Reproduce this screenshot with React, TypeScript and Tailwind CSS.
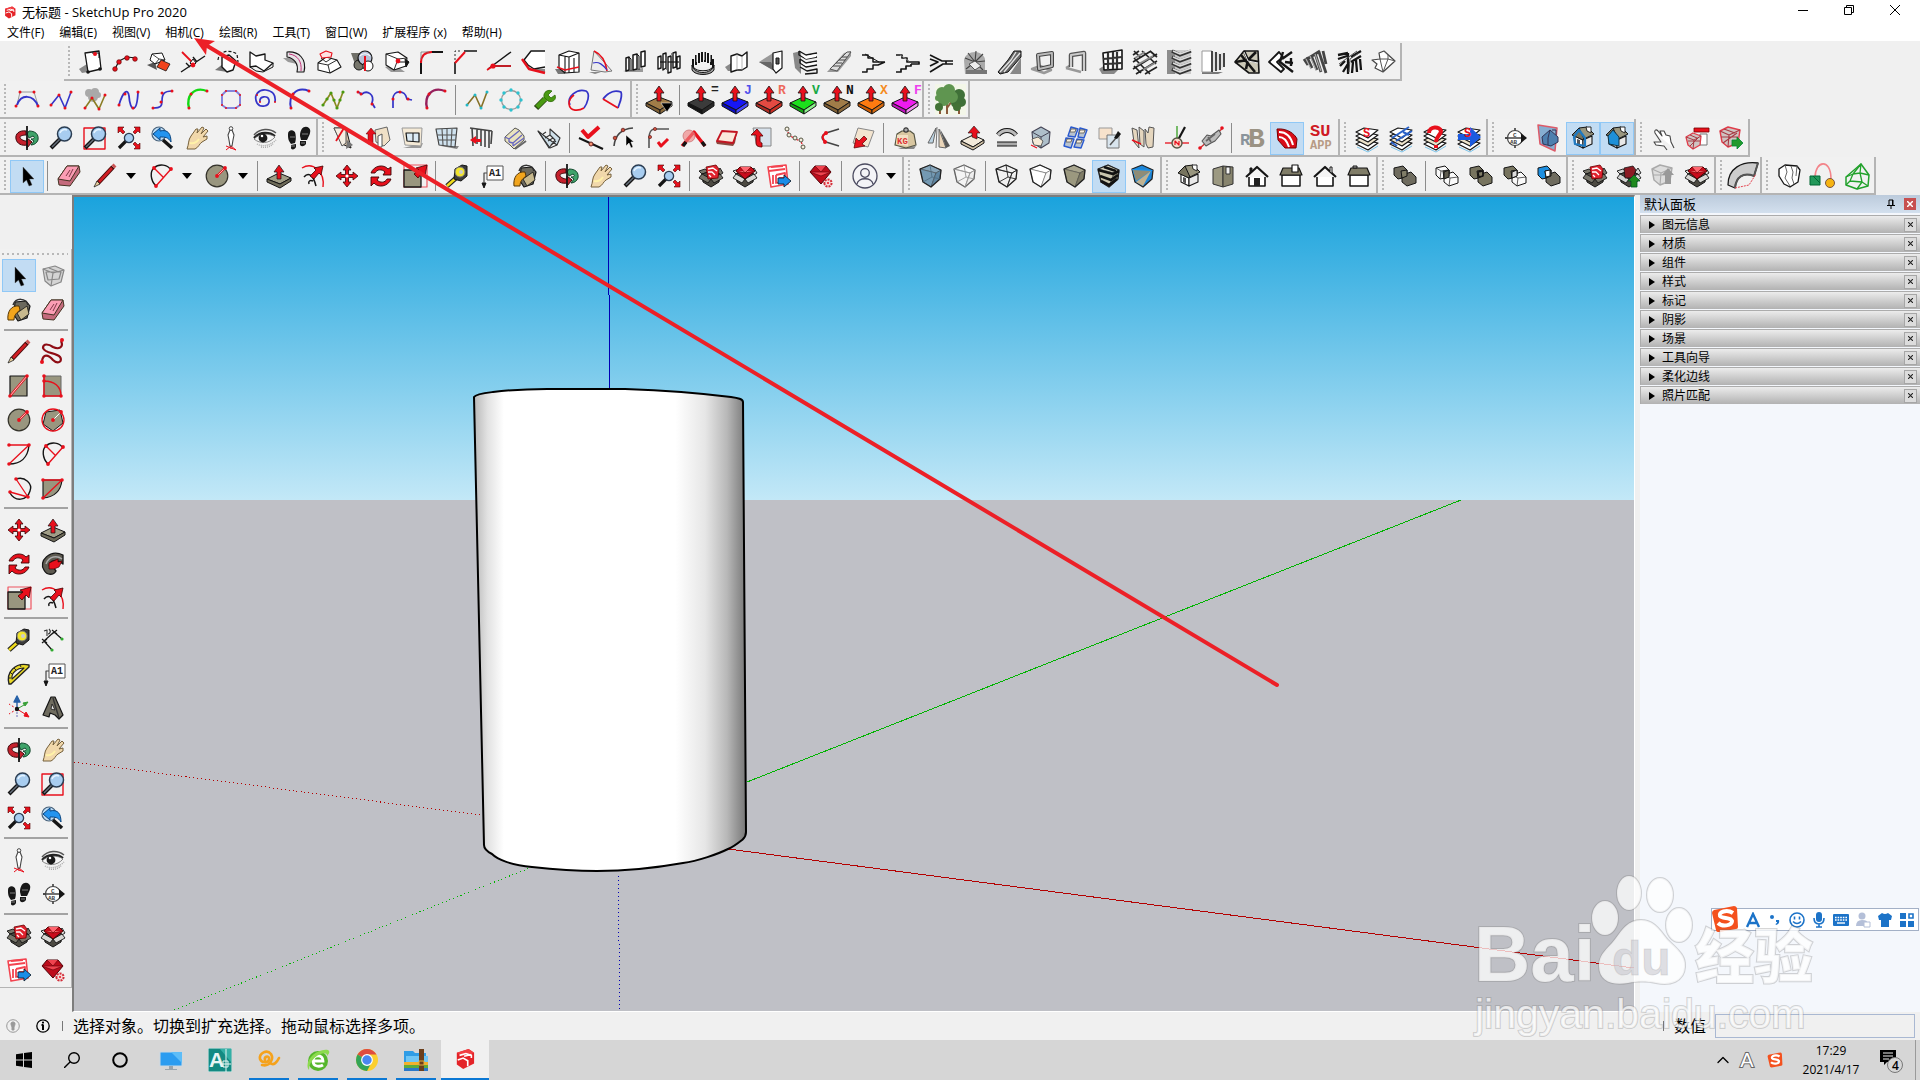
import { ChevronUp } from 'lucide-react';

// [path, fill, stroke, stroke width, dash]
type Shape = [string, string?, string?, number?, string?];
// [x, y, text, fill, font size]
type Label = [number, number, string, string, number];

interface Icon {
  shapes: Shape[];
  labels?: Label[];
}

const K = '#151515';
const R = '#e8101c';
const TAN = '#99967f';
const BLUE = '#3434c8';
const G = '#8c8c8c';
const W = '#ffffff';
const NO = 'none';

const dot = (x: number, y: number, r = 1.7) =>
  `M${x - r} ${y}a${r} ${r} 0 1 0 ${2 * r} 0a${r} ${r} 0 1 0 ${-2 * r} 0z`;

const dots = (points: number[][], fill = R, r = 1.5): Shape => [points.map(([x, y]) => dot(x, y, r)).join(''), fill, NO];

const upArrow = 'M12 -2L17 5H14V13H10V5H7Z';

const push = (top: string, left: string, right: string): Shape[] => [
  ['M-1 15L12 9L25 14L13 22Z', top, K, 1],
  ['M-1 15L13 22V26L-1 18Z', left, K, 1],
  ['M13 22L25 14V18L13 26Z', right, K, 1],
  [upArrow, R, K, 0.8],
];

const layers: Shape[] = [
  ['M1 18L9 14L23 17L13 24Z', W, K, 1.2],
  ['M1 14L9 10L23 13L13 20Z', '#ece3cb', K, 1.2],
  ['M1 10L9 6L23 9L13 16Z', W, K, 1.2],
  ['M1 6L9 2L23 4L13 12Z', W, K, 1.2],
  ['M2 21L13 26L23 20', NO, '#7cc4ea', 1],
];

const cube = (a: string, b: string, c: string, stroke = '#222'): Shape[] => [
  ['M1 5L11 1L22 6L17 9Z', a, stroke, 0.4],
  ['M1 5L17 9L12 23L4 18Z', b, stroke, 0.4],
  ['M17 9L22 6L21 15L12 23Z', c, stroke, 0.4],
  ['M1 5L11 1L22 6L21 15L12 23L4 18Z', NO, stroke, 1.3],
];

const house: Shape[] = [
  ['M4 10L12 14V22L4 18Z', W, K, 1.1],
  ['M12 14L21 10V18L12 22Z', '#e8e8e8', K, 1.1],
  ['M1 9L8 2L14 8L12 14Z', '#77745f', K, 1],
  ['M8 2L16 1L23 8L13 13Z', TAN, K, 1],
  ['M15 1H20V7L16 5Z', W, K, 0.9],
  ['M6 13L9 14V20L6 18Z', '#555', NO],
];

const solid = (a: string, b: string): Shape[] => [
  ['M1 4L10 2L14 6V13L5 15L1 11Z', a, K, 1],
  ['M9 11L18 8L23 13V19L14 22L9 18Z', b, K, 1],
  ['M8 7L14 6V12L9 14Z', '#807d68', K, 1],
];

const crate = (flaps = '#77756a'): Shape[] => [
  ['M3 10L0 7L6 5L10 8ZM18 8L21 4L24 9L21 11Z', flaps, K, 0.9],
  ['M3 10L12 7L21 10L20 18L12 23L4 18Z', '#4c4a42', K, 1],
  ['M3 10L12 15L21 10L24 14L15 19L12 15L9 19L0 14Z', flaps, K, 0.9],
];

const magnifier: Shape[] = [
  ['M2 22L11 13', NO, K, 4],
  ['M3 21L11 13', NO, '#66707c', 1.4],
  [dot(15.5, 8, 7), '#a8cdf0', '#2b3d52', 1.5],
  ['M11 7C12 4 15 3 18 4', NO, '#e4f3ff', 1.5],
];

const icons: Record<string, Icon> = {
  // edge and surface plugins
  sheet: { shapes: [['M0 19L8 14L9 22L3 23Z', '#888'], ['M6 3L20 1L22 19L9 22Z', W, K, 1.3], ['M13 3H20V8', NO, K, 1], dots([[16, 4]], R, 2), dots([[9, 22], [21, 19]], K, 1.8)] },
  beads: { shapes: [['M2 19L6 11L14 7L23 8', NO, K, 1.2], [dot(2, 19, 2.3) + dot(6, 12, 2.3) + dot(14, 8, 2.3) + dot(22, 9, 2.3), R, '#600', 0.7]] },
  patch: { shapes: [['M0 15L8 12L10 20L4 17Z', '#555'], ['M5 4L15 3L18 10L8 14L3 10Z', W, K, 1], ['M5 4L12 9L18 10M12 9L8 14', NO, K, 0.8], ['M10 17L14 10L23 14L19 21Z', '#f2441d', K, 0.8]] },
  weld: { shapes: [['M1 2L12 13', NO, R, 1.8], ['M0 22L12 14L24 6M5 13L9 17M12 7L16 12', NO, K, 1.4], ['M9 13L12 9L15 13L12 16Z', W, K, 1], dots([[12, 15]], R, 2.4)] },
  shell: { shapes: [['M0 20L8 14L12 22Z', '#777'], ['M7 7L14 5L21 11L18 20L12 22L7 17Z', W, K, 1.4], ['M3 10C4 1 14 -1 22 4L23 12', NO, K, 1.2, '3 2']] },
  extrude: { shapes: [['M1 2L7 6L16 4V10L24 13L15 21L7 16L1 17Z', W, K, 1.3], ['M1 17L7 21L14 22L24 17V13', NO, K, 1]] },
  pipe: { shapes: [['M0 8H9L14 14L5 12Z', '#999'], ['M4 2C16 1 24 9 21 22L14 22C16 14 11 8 4 7Z', '#e6e3e6', K, 1.1], ['M6 4C15 5 19 12 18 21', NO, '#c2347a', 1]] },
  dome: { shapes: [['M1 13L9 7L20 10L24 17L13 23L1 20Z', W, K, 1.1], ['M1 13L11 15L20 10M11 15L13 23M4 8L9 12L15 8', NO, K, 0.9], ['M3 4L9 1L15 3L14 7L5 8Z', '#ffe2e2', R, 1.1]] },
  spheres: { shapes: [['M0 3H10V17H5Z', '#6f6f68'], [dot(8, 15, 5), '#77766c', K, 1], [dot(14, 8, 7), '#b9c3d8', K, 1.2], [dot(17, 16, 5), W, K, 1], ['M14 6V21', NO, R, 2], ['M9 6C11 3 17 3 19 6', NO, W, 1.2]] },
  boxarrow: { shapes: [['M0 17L9 14L20 22H6Z', '#999'], ['M1 4L13 2L22 8L21 16L9 20L1 15Z', W, K, 1.1], ['M1 4L13 9L22 8M13 9L9 20', NO, K, 0.9], ['M14 12H24M20 9L24 12L21 17Z', K, K, 1], dots([[13, 11]], R, 2.4)] },
  fillet: { shapes: [['M2 24V11M12 2H24', NO, K, 2], ['M2 13C2 6 5 2 13 2', NO, R, 2], ['M2 9V2H10', NO, '#777', 0.8]] },
  chamfer: { shapes: [['M2 24V12M11 1H24', NO, K, 1.6], ['M2 13L12 2', NO, R, 2], ['M2 10V1H9', NO, K, 0.9, '2 2']] },
  angle: { shapes: [['M1 19L24 2M6 16H24', NO, K, 1.4], ['M0 20L6 16H24', NO, R, 1.6], dots([[6, 16]], R, 2.6)] },
  offset3d: { shapes: [['M3 12L9 20L24 23V19H10Z', '#888'], ['M24 1H10L3 10L7 15L13 19L24 17Z', W], ['M24 1H10L3 10L7 15L13 19L24 17', NO, K, 1.4], ['M1 9L8 19L24 23', NO, R, 2.4]] },
  drape: { shapes: [['M0 19H10V24H3Z', '#777'], ['M4 5L14 1L24 3V22L10 23L4 18Z', W, K, 1.2], ['M4 5L14 7L24 3M10 6V23M14 7V23M19 8V22', NO, K, 1.1], ['M2 17L10 20L24 17', NO, R, 1.5]] },
  sail: { shapes: [['M0 22H12L6 24Z', '#888'], ['M5 1L2 20L16 22L23 21L16 13Z', '#ececec', '#777', 1], ['M5 1C14 5 17 13 18 21', NO, R, 1.6], ['M4 13C10 11 14 15 18 20', NO, BLUE, 1.2]] },
  columns: { shapes: [['M0 21L20 18V22H5Z', '#999'], ['M3 8L6 7V20L3 21ZM10 5L14 4V19L10 20ZM18 2L22 1V16L18 17Z', W, K, 1.5], ['M6 7L8 9V21M14 4L16 6V20', NO, K, 1]] },
  manycolumns: { shapes: [['M1 7L4 6V18L1 19ZM6 4L9 3V18L6 20ZM11 7L14 6V22L11 23ZM16 3L19 2V17L16 18ZM20 7L23 6V18L20 19Z', W, K, 1.4], ['M3 12H22', NO, K, 1.2], ['M8 8H10V20M14 4H16', NO, '#666', 1.5]] },
  ringcolumns: { shapes: [['M1 15C3 25 21 25 23 15V20C20 26 4 26 1 20Z', '#999', K, 1], ['M2 9V17M5 5V15M8 3V13M11 2V12M14 2V12M17 3V13M20 5V15M22 9V18', NO, K, 2], ['M2 17C6 22 18 22 22 17', '#eee', K, 1.2], ['M6 4V12M13 2V10M19 5V12', NO, W, 0.9]] },
  fold: { shapes: [['M0 17L8 12V21L3 21Z', '#888'], ['M6 6L12 4V20L6 22ZM12 4L17 6V20L12 20ZM17 6L22 2V17L17 20Z', W, NO], ['M6 22V6L12 4L17 6L22 2V17L17 20L12 20Z', NO, K, 1.4], ['M12 4V20M17 6V20', NO, '#999', 0.7]] },
  wallwindow: { shapes: [['M0 12L14 3V20Z', '#999'], ['M0 12L12 12L17 22Z', '#666'], ['M14 3L23 1V18L17 23L14 19Z', W, K, 1.2], ['M17 8H20V14H17Z', '#555', K, 1]] },
  shelves: { shapes: [['M0 3L8 1V24L2 18Z', '#888'], ['M6 1L13 5L24 3M6 1V5L13 9L24 7M7 9L13 13L24 11M7 9V13L13 17L24 15M7 17L14 21L24 19V23L12 24', NO, K, 1.4], ['M8 5L13 9L23 7V4L13 6ZM8 13L13 16L23 14V12L13 14Z', W]] },
  ramp: { shapes: [['M0 22L17 3L24 1V6L11 22Z', '#999'], ['M3 19L20 2L24 2L10 21Z', '#ddd', '#555', 1], ['M6 16H13M9 13H15M12 10H18M15 7H20', NO, '#444', 1]] },
  steps1: { shapes: [['M1 5H7V8H12V12H24M1 22H6V19H12V15H17L24 12', NO, K, 1.5], ['M4 4L18 12', NO, K, 1]] },
  steps2: { shapes: [['M1 5H7V8H12V12H24V14H16M1 22H6V19H11V16H16V14', NO, K, 1.7], ['M5 5L14 11', NO, '#888', 1]] },
  split: { shapes: [['M1 5L13 11H24M1 9L9 12L1 16M1 22L14 14H24M17 11V14', NO, K, 1.7]] },
  gearshade: { shapes: [['M1 10C3 0 19 -1 22 9V24H2Z', '#aaa'], ['M12 12L2 8M12 12L5 3M12 12L13 1M12 12L20 4M12 12L22 11M12 12L20 20M12 12L12 24M12 12L3 19', NO, '#444', 1.1], ['M6 14L12 11L18 16L12 20Z', '#eee', '#555', 1], ['M3 20H24V24H3Z', '#777']] },
  escalator: { shapes: [['M13 24L24 8V24Z', '#888'], ['M1 22L11 10L17 1L24 1V7L11 22L3 24Z', '#666', K, 1], ['M3 22L14 10L19 2M7 22L17 10L23 3', NO, '#e6e6e6', 1.3]] },
  frame: { shapes: [['M1 19L9 16L20 20L13 23Z', NO, '#999', 2.5], ['M7 5L21 3V16L8 19Z', NO, '#444', 4], ['M7 5L21 3V16L8 19Z', NO, '#bbb', 1.8]] },
  arch: { shapes: [['M1 18L16 22M1 18L6 15', NO, '#999', 2.5], ['M6 17V5L19 3V21', NO, '#555', 4.5], ['M6 17V5L19 3V21', NO, '#ccc', 2]] },
  mesh: { shapes: [['M0 19L6 15V20L20 19L15 24H3Z', '#888'], ['M4 3L23 0V19L5 20Z', W, K, 1.6], ['M9 3V20M14 2V19M18 2V19M4 9L23 7M4 14L23 13', NO, '#333', 2.2]] },
  weave: { shapes: [['M0 0H24V24H0Z', '#f3f3f3'], ['M0 5L6 1M0 12L18 1M0 19L24 4M3 24L24 11M12 24L24 17M1 1L8 8M9 1L23 14M1 8L17 24M1 16L8 23M17 1L24 7', NO, '#222', 1.7], ['M2 8L12 2M4 15L20 6M10 20L22 13', NO, G, 2]] },
  louvers: { shapes: [['M0 0H8V24H0Z', G], ['M8 0H24V24H8Z', '#ccc'], ['M5 1L13 5L24 1M5 7L13 11L24 7M5 13L13 17L24 13M5 19L13 23L24 19', NO, '#333', 3.4], ['M6 1L13 4L24 0M6 7L13 10L24 6M6 13L13 16L24 12M6 19L13 22L24 18', NO, '#ddd', 1.5]] },
  curtains: { shapes: [['M1 22H22L17 24H1Z', '#777'], ['M1 1H11V22H1Z', W, '#999', 1], ['M11 1V22M15 2V21M19 4V20M23 3V17', NO, '#444', 2], ['M13 2V21M17 3V20M21 3V18', NO, '#ddd', 1.6]] },
  hexa: { shapes: [['M0 12L9 1H23L24 23H14Z', '#ccc9b8', K, 1.6], ['M9 1L13 10L24 12M0 12L13 10L11 19M6 5L20 22M13 10L21 2', NO, K, 2.6], ['M9 2L13 11L23 13', NO, '#eee', 1]] },
  hexb: { shapes: [['M0 12L10 2L14 7L8 12L15 19L12 22Z', W, K, 1.8], ['M14 2L11 12L24 22M13 9L23 2M16 12L24 13M22 16V8', NO, K, 2.4]] },
  rafters: { shapes: [['M1 9L5 15M4 7L9 18M8 5L14 20M12 3L18 22M16 2L23 23M20 1L23 14M1 11L17 1', NO, '#444', 2.8], ['M3 9L8 19M7 6L13 20M12 4L18 21', NO, '#aaa', 1.2]] },
  branches: { shapes: [['M1 5L11 3M1 9L10 6M3 16L8 11M12 12L6 22M11 3V24M24 1L14 7M24 6L14 12M16 12L15 23M19 10L20 22M23 9L24 20', NO, K, 2.3], ['M2 14L20 1M13 9L12 22M22 3L13 9', NO, '#555', 1]] },
  gem: { shapes: [['M1 10L9 9L8 3L13 1L24 11L12 22L4 18L6 14Z', W, '#444', 1.2], ['M9 9H17V5L13 1M17 9L24 11M9 9L12 22L17 9', NO, '#555', 1]] },
  // curves
  arcframe: { shapes: [['M5 4H19M5 4L2 17M19 4L23 17', NO, '#999', 1], ['M2 17C6 6 18 6 23 18', NO, BLUE, 2], dots([[5, 4], [19, 4], [1, 18], [23, 18]])] },
  zig: { shapes: [['M2 17L10 7L16 20L22 4', NO, BLUE, 1.6], dots([[2, 17], [10, 7], [16, 20], [22, 4]])] },
  zigcloud: { shapes: [[dot(6, 5, 4) + dot(12, 4, 4) + dot(10, 9, 5) + dot(15, 7, 3), '#a9a9a9'], ['M2 20L9 10L16 21L22 7', NO, '#8b7d25', 1.6], dots([[2, 20], [9, 10], [16, 21], [22, 7]])] },
  wave: { shapes: [['M2 17C6 3 11 0 12 8C13 24 20 26 21 4', NO, BLUE, 1.8], dots([[2, 17], [8, 6], [16, 20], [21, 4]])] },
  ess: { shapes: [['M2 20C10 20 11 18 11 13C11 6 13 3 21 3', NO, BLUE, 1.7], dots([[2, 20], [10, 14], [11, 5], [21, 3]])] },
  greenarc: { shapes: [['M4 20C1 8 9 -2 22 3', NO, '#13d913', 2.4], dots([[4, 20], [6, 6], [22, 3]])] },
  roundrect: { shapes: [['M7 3H17L21 7V17L17 20H7L3 17V7Z', NO, '#8585dc', 2], dots([[7, 3], [17, 3], [21, 7], [21, 17], [17, 20], [7, 20], [3, 17], [3, 7]], R, 1)] },
  spiral: { shapes: [['M7 14C6 8 15 7 16 12C17 19 7 20 4 15C0 7 6 1 13 2C20 3 23 7 22 14', NO, BLUE, 1.7], dots([[7, 14], [22, 14], [4, 7]], R, 1)] },
  bluearc: { shapes: [['M4 20C1 8 9 -2 22 3', NO, BLUE, 2], dots([[4, 20], [6, 6], [22, 3]])] },
  zigolive: { shapes: [['M2 17L10 5L16 20L22 4', NO, '#8a8a22', 1.7], dots([[2, 17], [10, 5], [16, 20], [22, 4], [6, 11], [13, 12], [19, 12]], '#4a9a10', 1.6)] },
  hook: { shapes: [['M3 4L7 6C12 2 20 6 17 15L20 20', NO, BLUE, 1.8], dots([[3, 4], [6, 6], [17, 16]])] },
  hump: { shapes: [['M4 20V11C4 2 16 1 18 11L23 12', NO, BLUE, 1.7], dots([[4, 11], [11, 4], [19, 11]])] },
  maroonarc: { shapes: [['M4 20C1 8 9 -2 22 3', NO, '#96205c', 2.4], dots([[4, 20], [6, 6], [22, 3]])] },
  zigcyan: { shapes: [['M2 17L10 7L16 20L22 4', NO, '#857026', 1.6], dots([[2, 17], [10, 7], [16, 20], [22, 4]], '#22b8c8')] },
  ring: { shapes: [[dot(12, 12, 9.5), NO, '#999', 1.3], dots([[12, 2], [19, 5], [22, 12], [19, 19], [12, 22], [5, 19], [2, 12], [5, 5]], '#2cc3d0', 1.7)] },
  wrench: { shapes: [['M3 20L12 11', NO, '#2c4a12', 6], ['M4 19L14 9', NO, '#4a9a12', 4.5], ['M11 9C10 4 15 1 19 3L15 7L18 10L22 7C24 12 19 15 15 13Z', '#4a9a12', '#2d6a08', 0.8]] },
  drop: { shapes: [['M3 17C-1 9 10 0 19 3C24 6 20 16 17 20', NO, BLUE, 1.7], ['M17 20C12 23 3 24 2 16C2 12 4 9 7 7', NO, R, 1.7]] },
  wedge: { shapes: [['M2 11C8 3 15 2 20 4C22 9 18 16 17 20', NO, BLUE, 1.8], ['M2 11L17 20', NO, R, 1.8]] },
  // push-pull
  pushmenu: { shapes: [...push('#a07c48', '#7d5e34', '#8b6a3c'), ['M14 15H26L20 24Z', '#000', W, 0.5]] },
  pushblack: { shapes: push('#3b3b3b', '#151515', '#282828'), labels: [[22, 5, '=', '#222', 13]] },
  pushblue: { shapes: push('#1717f5', '#0a0abf', '#4747ff'), labels: [[21, 6, 'J', '#5151ec', 13]] },
  pushred: { shapes: push('#e34a42', '#ae2b22', '#c92d22'), labels: [[21, 6, 'R', '#ed6a5b', 13]] },
  pushgreen: { shapes: push('#1ce01c', '#12a612', '#8cf08c'), labels: [[21, 6, 'V', '#17a944', 13]] },
  pushbrown: { shapes: push('#a07c48', '#7d5e34', '#8b6a3c'), labels: [[21, 6, 'N', '#111', 13]] },
  pushorange: { shapes: push('#ff7a10', '#cc5a00', '#d56a10'), labels: [[21, 6, 'X', '#f58a20', 13]] },
  pushpink: { shapes: push('#ee1cee', '#c010c0', '#f48af4'), labels: [[21, 6, 'F', '#ee40ee', 13]] },
  trees: { shapes: [['M-4 -4H27V27H-4Z', '#f3f6e8'], ['M8 12V26M20 14V26M1 18V26M8 20L13 13', NO, '#8a5a3a', 2], [dot(20, 7, 6) + dot(22, 14, 5) + dot(17, 15, 5), '#3f7038'], [dot(3, 5, 6) + dot(10, 2, 6) + dot(13, 9, 6) + dot(5, 12, 6) + dot(-1, 10, 3), '#5f9550'], [dot(0, 19, 4) + dot(18, 19, 4), '#427236']] },
  // camera
  orbit: { shapes: [['M11 5C4 4 0 8 1 13C2 18 7 20 12 19V22L17 16L12 12V15C8 15 5 13 5 11C5 10 8 9 11 9Z', '#c5202c', '#3d0a0d', 1], ['M14 5C20 5 24 8 23 14C22 17 19 19 16 19L19 15L16 13C20 13 20 11 18 10L14 12L12 8Z', '#3fa36a', '#11492c', 1], ['M12 0V24', NO, K, 1.8]] },
  zoom: { shapes: magnifier },
  zoomwindow: { shapes: [['M1 2H22V23H1Z', NO, R, 1.4], ...magnifier] },
  extents: { shapes: [['M2 22L9 15', NO, K, 3.2], [dot(12, 12, 4.6), '#a8cdf0', '#2b3d52', 1.3], ['M1 1H7L5 3L8 6L6 8L3 5L1 7ZM23 1V7L21 5L18 8L16 6L19 3L17 1ZM23 23H17L19 21L16 18L18 16L21 19L23 17Z', R, '#500', 0.6]] },
  previous: { shapes: [[dot(8, 8, 7), '#bcdcf5', '#47617a', 1.2], ['M12 14L21 22', NO, K, 3.5], ['M2 8L9 2V5C17 3 20 8 20 16C17 11 14 11 9 11V14Z', '#2394ef', '#0a4580', 1]] },
  hand: { shapes: [['M2 23C4 18 3 14 6 10L11 3L13 3L12 7L17 1L19 2L16 8L21 3L23 5L18 11L22 10L22 13L17 16C14 18 14 21 10 23Z', '#f1d8ab', '#75603c', 1], ['M5 17C9 18 12 16 14 13', NO, '#fff2a8', 2]] },
  person: { shapes: [['M7 24L12 20L17 24M7 20L17 24M12 18V23', NO, R, 1], ['M11 4H13L15 9L14 14L13 20H11L10 14L9 9Z', W, '#444', 1.1], [dot(12, 2.5, 1.8), W, '#444', 1]] },
  look: { shapes: [['M1 9C7 2 17 2 23 7', NO, '#555', 1.4], ['M1 12C7 5 17 6 22 10', NO, '#222', 2.2], ['M1 13C7 7 17 7 22 11C16 18 7 18 1 13Z', '#f6f6f6', '#666', 0.8], [dot(10, 12, 4.4), '#1a1a1a'], dots([[9, 10]], W, 1.3), ['M4 18C9 21 17 20 23 14M8 21C12 22 17 21 20 18', NO, '#aaa', 1.4, '1 1']] },
  walk: { shapes: [['M1 8C1 3 8 3 8.500 8C9 12 9 14 8 17L4 18C1 14 1 12 1 8Z', '#181818'], ['M4 19L9 18V21C8 24 4 24 4 22Z', '#181818'], ['M13 10C13 2 18 -1 22 2C25 5 22 10 20 14L14 14Z', '#181818'], ['M13 15L19 15V18C16 22 12 20 13 17Z', '#181818'], ['M3 11H8M15 8H21M4 20H8M14 17H18', NO, '#999', 0.8]] },
  // architecture
  wallbrush: { shapes: [['M1 2L13 2L18 22L9 18Z', '#d9c2a5', K, 1], ['M1 2L13 2V17L9 20Z', '#f5eee2', '#555', 1], ['M3 15L11 2', NO, R, 1.8], ['M14 14L20 19L13 23', '#777']] },
  doorup: { shapes: [['M8 4L20 1L23 14L17 20L9 16Z', '#f0e0c6', '#666', 1], ['M11 10L15 8V21H11Z', W, '#555', 1], ['M1 18V8H-1L4 2L9 8H6V18Z', R, '#500', 0.5]] },
  windowwall: { shapes: [['M2 22L22 17L20 22Z', '#999'], ['M1 2L21 2L20 20L4 19Z', '#f5ead6', '#999', 1], ['M5 7H18V16L6 15Z', '#dcebf5', K, 1.2], ['M12 7V15', NO, K, 1]] },
  gridwindow: { shapes: [['M6 20H24L22 23Z', '#888'], ['M1 3L22 2L20 21L4 19Z', '#cfe2ef', '#444', 1.2], ['M7 3L8 19M12 3V20M17 3L16 20M2 9H21M3 14H20', NO, '#555', 1.1]] },
  railing: { shapes: [['M1 2L23 5M3 2L4 20M8 3V18M12 3V20M16 4V21M20 5V22M23 5L22 18', NO, '#444', 1.6], ['M12 13H7V10L1 14L7 18V16H12Z', R]] },
  yellowsteps: { shapes: [['M2 11L12 2L16 4L21 10L21 14L11 23L7 19L2 15Z', '#eae3be', '#555', 1], ['M2 11L6 13L16 5M6 16L10 17L19 9M10 20L21 12M6 13V16M10 17V20', NO, '#6867c0', 1.3], ['M12 23L23 15', NO, '#666', 2]] },
  ladder: { shapes: [['M1 5L10 12L20 19L23 12L13 3V9L18 14L12 22Z', '#cfe0ea', '#333', 1.1], ['M1 5L13 22L20 19M6 8L9 6M8 12L13 9M11 15L16 12M14 19L19 15', NO, '#333', 1.1]] },
  checkline: { shapes: [['M0 12L24 23', NO, K, 2], ['M3 4L9 11L20 1', NO, R, 4], [dot(12, 18, 2), '#f59070', '#622', 1]] },
  curvecursor: { shapes: [['M1 20C2 10 8 3 20 2', NO, '#444', 1.6], [dot(2, 12, 1.8) + dot(10, 4, 1.8), '#c9503a', '#622', 0.8], ['M13 9V20L16 17L18 22L20 21L18 16H21Z', '#000', W, 0.5]] },
  cornercheck: { shapes: [['M2 22V12C2 7 4 3 8 3H22', NO, '#555', 1.6], [dot(3, 11, 1.6) + dot(8, 3, 1.6), '#d05340', '#622', 0.7], ['M11 16L14 20L21 13', NO, R, 3]] },
  roofhandle: { shapes: [['M1 20L13 6L24 20', NO, R, 3.4], ['M2 20L5 16M21 16L24 20', NO, K, 3.4], [dot(8, 10, 6), 'rgba(240,130,130,.65)', '#c77', 0.8]] },
  redquad: { shapes: [['M1 16L7 5L22 6L20 17L18 20L2 18Z', '#8a4a40', NO], ['M2 15L7 5L22 6L18 17Z', '#fbe9dc', '#c31522', 1.8]] },
  turnup: { shapes: [['M4 2H22V20H8Z', '#d8e2ec', '#888', 1], ['M7 9V17C7 20 10 21 13 21V17C11 17 11 15 11 13V10H14L8 3L2 9Z', R, '#500', 0.8]] },
  chain: { shapes: [['M4 3L6 9L12 13L18 15L20 21', NO, R, 1.2, '2 1'], [dot(4, 3, 2) + dot(6, 9, 2) + dot(12, 12, 2) + dot(18, 14, 2) + dot(20, 21, 2), '#f3eedf', '#554', 1]] },
  bend: { shapes: [['M22 3L9 7C3 10 5 14 9 16L22 20', NO, '#444', 1.7], ['M10 7C4 9 5 13 9 16', NO, R, 2], dots([[9, 7], [8, 16]], R, 2)] },
  sheetdown: { shapes: [['M7 2L23 5L17 21L2 17Z', '#f3e4cf', '#888', 1], ['M13 10L16 13L11 18L14 20L3 22L5 12L8 15Z', R, '#500', 0.7]] },
  weight: { shapes: [['M5 22L23 20L21 23H8Z', '#888'], ['M4 8L9 5H17L21 8L23 19L13 22L2 19Z', '#d9c7a1', '#554', 1.2], [dot(13, 4, 2.2), '#aaa', '#333', 1.2], ['M4 9H15V20L3 18Z', '#f2e0c4']], labels: [[4, 18, 'KG', '#d33', 9]] },
  mirror: { shapes: [['M9 2L1 17H6Z', '#bcd3e2', '#666', 1], ['M12 3V21L19 22Z', '#e9d4b8', '#666', 1], ['M13 3L23 20L19 22Z', '#555'], ['M10 1L9 22', NO, '#777', 1]] },
  pushbox: { shapes: [['M0 15L12 9L23 14L12 21Z', '#f3eada', K, 1], ['M0 15V18L12 24L23 17V14L12 21Z', '#cfc0a6', K, 1], ['M13 0L19 7H16V13L11 11V7H7Z', R, K, 0.6]] },
  flex: { shapes: [['M3 9C8 3 16 3 21 9', NO, K, 5], ['M3 9C8 3 16 3 21 9', NO, '#bbb', 3], ['M2 18H22', NO, K, 5], ['M2 18H22', NO, '#aaa', 3]] },
  glassbox: { shapes: [['M3 6L12 1L21 6L20 17L12 22L4 17Z', '#aebfca', '#445', 1.1], ['M3 6L12 11L21 6M12 11V22', NO, '#445', 1], ['M3 13L9 11L14 15L12 20L5 19Z', '#f4ead7', '#555', 0.9], ['M2 19L8 22', NO, R, 1.2]] },
  blocks: { shapes: [['M8 1L15 3L12 11L5 10ZM17 2L24 4L21 12L15 11ZM3 12L11 13L8 22L1 20ZM14 13L21 14L18 22L11 21Z', '#b9c3ce', '#2a5ad0', 1.4], ['M8 3H13L12 6H7ZM17 4H22L21 7H16ZM4 13H9L8 16H3ZM14 14H19L18 17H13Z', '#f6ecd9', '#555', 0.8]] },
  picker: { shapes: [['M2 2H15V13H2Z', '#f7e2cc', '#999', 1], ['M10 9H22V22H10Z', '#d9e5ee', '#777', 1], ['M13 19L19 12', NO, '#555', 1.5], ['M17 12L21 5L24 8L20 13Z', K]] },
  planks: { shapes: [['M1 2L6 4L8 22L3 16ZM8 1L13 5V21L9 18ZM14 3L17 7L18 1L23 2L22 21L17 22L15 18Z', '#e5d6be', '#555', 1], ['M1 14L10 18', NO, R, 1.6]] },
  axisn: { shapes: [['M0 17H24', NO, R, 1.3], ['M12 17V0', NO, '#69b55a', 1.8], ['M13 14L20 1', NO, K, 2.2], [dot(12, 17, 5), '#f7d8cc', '#554', 1.4], ['M10 19V15L14 19V15', NO, R, 1.2]] },
  engine: { shapes: [['M1 22L24 2', NO, '#c33', 1.4], ['M3 15L8 9L12 10L20 4L22 8L16 15L12 17L7 20Z', '#bbb', '#555', 1.1], ['M7 15L16 8M9 11L12 16', NO, '#666', 1.6], dots([[1, 22], [23, 2]], R, 1.8)] },
  rb: { shapes: [], labels: [[-1, 19, 'R', '#8a949b', 17], [7, 21, 'B', '#9b9384', 28]] },
  fan: { shapes: [['M2 3C12 2 20 8 22 13L21 22H10L3 14Z', '#d90d19', '#700', 1], ['M4 6C11 6 16 11 18 19M4 11C9 11 12 15 14 21', NO, W, 2]] },
  suapp: { shapes: [], labels: [[1, 10, 'SU', '#cf1a24', 17], [1, 23, 'APP', '#b79b85', 12]] },
  layers: { shapes: layers, labels: [[8, 11, 'S', R, 12]] },
  layersblue: { shapes: [...layers, ['M3 12L20 1M7 15L23 5M2 16L8 20M14 6L20 9', NO, '#2a62c8', 2]] },
  layersq: { shapes: [...layers, ['M6 7C6 0 17 0 18 5C18 9 13 10 13 16M13 19V22', NO, R, 4]] },
  layersgo: { shapes: [...layers, ['M1 8H13V1L24 11L13 21V14H1Z', '#1b5be0']], labels: [[7, 11, 'S', R, 12]] },
  // sections
  sectionplane: { shapes: [['M2 12H22M12 2V22', NO, K, 1.3], [dot(12, 12, 7.5), W, '#444', 1.2], ['M5 12H19', NO, K, 1.2], ['M18 7L24 12L18 17Z', K]], labels: [[10, 11, 'C', '#444', 6], [7, 18, 'AB', '#444', 6]] },
  sectionred: { shapes: [['M1 -1L20 2L18 25L3 18Z', '#86aed1', '#dd5a68', 1.5], ['M5 11L13 4L21 11V16L14 20L6 18Z', '#4d7fae', '#335', 1], ['M13 4L11 12V19M15 4H19V9', NO, '#335', 1]] },
  sectionhouse: { shapes: [...house, ['M3 11L8 4L14 12V20L4 18Z', NO, '#1f7ac2', 2.2]] },
  sectionfill: { shapes: [...house, ['M3 10L8 4L14 11V20L4 18Z', '#1e90d8', '#134', 1]] },
  pointer: { shapes: [['M4 7C3 4 5 3 7 5L11 10L9 5L13 5L15 9L19 10L20 16L23 22M16 24L13 20L5 19L3 16L10 16L4 7', W, '#444', 1.1]] },
  cratemenu: { shapes: [['M9 2H24V6H9Z', R, '#700', 0.8], ['M15 8H22V19H15Z', W, '#777', 1], ['M1 11L8 7L16 10L15 19L8 23L3 19Z', '#cfc4c2', '#e03c4a', 1.3], ['M1 11L9 14L16 10M9 14L8 23M3 15L15 15M5 9L12 12M5 20L14 11', NO, '#a83a44', 1]] },
  crategreen: { shapes: [['M1 5L9 1L21 4L19 17L9 21L3 16Z', '#cfc4c2', '#e03c4a', 1.4], ['M1 5L10 9L21 4M10 9L9 21M2 11L19 11M5 3L16 7M4 17L18 7', NO, '#a83a44', 1.1], ['M13 14H18V11L24 17L18 23V20H13Z', '#219a2c', '#083', 0.8]] },
  // principal
  select: { shapes: [['M8 3V19L11.500 16L14 22L17 21L14.500 15H19Z', '#000', '#555', 0.4]] },
  component: { shapes: [['M2 5L14 2L23 6L20 18L10 22L4 17Z', '#d4d4d4', '#888', 1.2], ['M2 5L12 9L23 6M12 9L10 22M5 8L7 16L18 15L20 8ZM8 4L18 8', NO, '#888', 1.2]] },
  eraser: { shapes: [['M10 2L22 2L23 8L13 22L2 21L1 15Z', '#c46a7c', '#432', 1], ['M10 2L22 2L13 17L1 15Z', '#fb9db4', '#432', 1], ['M9 12L13 6M12 13L16 5', NO, '#803848', 1]] },
  pencil: { shapes: [['M5 19L20 3', NO, '#430a0a', 4.6], ['M6 18L19 4', NO, '#d11d22', 2.6], ['M1 23L4 17L7 20Z', '#e9cf9c', '#222', 0.8], ['M20 3L22 1', NO, '#c55', 4]] },
  freehand: { shapes: [['M1 21C2 14 7 14 12 20C17 25 22 21 19 17C15 12 4 14 2 8C2 3 8 4 12 7C18 10 23 7 20 1', NO, '#8e0c14', 2.2], dots([[1, 22], [21, 0]], R, 2)] },
  rect: { shapes: [['M3 2H20V22H3Z', TAN, K, 1.2], ['M3 22L20 2', NO, R, 2.4], ['M3 22L20 2', NO, W, 0.8], dots([[3, 22], [20, 2]], R, 1.8)] },
  rotrect: { shapes: [['M3 2H20V22H3Z', TAN, '#666', 1], ['M3 2V22H20C20 12 13 7 3 7', NO, R, 1.5], dots([[3, 2], [3, 7], [3, 22], [20, 22]], R, 1.8)] },
  circle: { shapes: [[dot(12, 12, 10.8), TAN, '#33322a', 1.2], ['M12 12L20 4', NO, R, 2.2], ['M12 12L20 4', NO, W, 0.7], dots([[12, 12], [20, 4]], R, 1.9)] },
  polygon: { shapes: [['M5 4L19 2L22 15L12 23L2 16Z', TAN, K, 1], [dot(12, 12, 11), NO, R, 1.3], ['M12 12L20 4', NO, W, 1], dots([[12, 12], [20, 4]], R, 1.9)] },
  arcline: { shapes: [['M22 3C21 16 13 22 2 22', NO, K, 1.4], ['M2 3H22L2 22', NO, R, 1.3], dots([[2, 3], [22, 3], [2, 22]], R, 1.8)] },
  arc: { shapes: [['M7 22C1 16 1 7 5 4C10 -1 19 1 21 5', NO, K, 1.4], ['M5 4L14 13M22 5L7 22', NO, R, 1.4], dots([[5, 4], [22, 5], [7, 22]], R, 1.9)] },
  arc3: { shapes: [['M9 3C18 0 26 8 23 15C20 25 8 26 3 17', NO, K, 1.4], ['M9 3L21 21L3 16', NO, R, 1.3], dots([[9, 3], [21, 21], [3, 16]], R, 1.8)] },
  pie: { shapes: [['M2 4V22C14 21 20 14 21 4Z', TAN, K, 1.1], ['M2 4H21L2 22', NO, R, 1.3], dots([[2, 4], [21, 4], [2, 22]], R, 1.8)] },
  pushpull: { shapes: [['M0 15L12 9L24 14L13 20Z', '#a09d86', K, 1], ['M0 15V18L13 24L24 17V14L13 20Z', '#6d6a58', K, 1], ['M12 1L17 8H14V15H10V8H7Z', R, K, 0.7]] },
  follow: { shapes: [['M1 4C12 -3 24 8 22 23', NO, R, 1.4], ['M3 13C7 8 12 10 15 22M8 20C7 17 9 16 12 17', NO, K, 1.5], ['M22 2L20 11L18 9L13 15L9 12L15 6L13 4Z', R, '#400', 0.8]] },
  move: { shapes: [['M12 1L16 6H13.500V10.500H18V8L23 12L18 16V13.500H13.500V18H16L12 23L8 18H10.500V13.500H6V16L1 12L6 8V10.500H10.500V6H8Z', R, '#3c0505', 0.8], [dot(12, 12, 1.6), W]] },
  rotate: { shapes: [['M2 9C5 1 15 0 19 5L22 3V11H14L16 8C13 5 8 5 6 9ZM22 15C19 23 9 24 5 19L2 22V13H10L8 16C11 19 16 19 18 15Z', R, '#3c0505', 0.9]] },
  scale: { shapes: [['M1 1H24V23H1Z', NO, '#ee5560', 1.2], ['M1 6H18V23H1Z', TAN, K, 1.3], ['M24 1L22 12L19 9L15 14L11 10L16 6L13 4Z', R, '#400', 0.8]] },
  followpipe: { shapes: [['M22 3C9 -3 -3 9 3 18C6 24 13 23 15 19L12 15C9 18 7 14 9 11C12 7 18 8 22 12Z', '#5d5a50', K, 1.3], ['M5 12C8 4 16 3 21 7', NO, '#aaa', 1.5], ['M8 17V11L17 7V10L21 9L18 15L13 17Z', R, '#400', 0.7]] },
  tape: { shapes: [['M2 22L11 14', NO, '#222', 5], ['M2 22L11 14', NO, '#f0dc1c', 2.5], ['M10 5L17 1L22 2V12L16 17L9 15Z', '#3b3b3b', K, 1], [dot(15, 8, 5), '#f2e52c', '#777', 1], dots([[16, 8]], '#ccc', 2)] },
  text: { shapes: [['M5 24L3 19H7Z', K, K, 1], ['M5 19V9H9', NO, '#444', 1.2], ['M8 2H24V16H8Z', W, '#555', 1]], labels: [[10, 12, 'A1', '#222', 10]] },
  paint: { shapes: [['M8 4L19 3L23 8L20 20L11 23L7 17Z', '#6b695e', K, 1.2], ['M10 15L20 8L22 16L14 22Z', '#c7b98e', K, 0.8], ['M6 7C9 -1 19 0 21 7', NO, '#333', 1.5], ['M12 8C4 7 0 14 1 22L7 22C7 16 11 14 13 12Z', '#f1a51d', '#553605', 1]] },
  dimension: { shapes: [['M3 13L11 22M13 4L21 11M3 13L13 4M1 11L6 15M1 15L6 11M11 2L16 6M11 6L16 2', NO, K, 1.2], ['M3 3L6 2V8M8 1C11 4 8 6 7 6', NO, '#333', 1.1], dots([[11, 22], [21, 11]], '#2faa2f', 1.6)] },
  protractor: { shapes: [['M2 22C-1 10 8 0 22 3V5L4 22Z', '#e9d828', '#222', 1.4], ['M5 17C4 11 10 6 17 6Z', '#f3f3f3', '#222', 1.1], ['M2 16L4 16M3 10L5 12M7 6L9 8M13 3L14 5', NO, '#222', 1]] },
  axes: { shapes: [['M10 13V22', NO, '#99c', 1.5, '2 1'], ['M10 13V4M10 0L13 6H7Z', '#2862a8', '#2862a8', 1.4], ['M10 13L18 18M22 21L17 20L19 16Z', R, R, 1], ['M10 13L17 9M21 6L16 7L18 10Z', '#38a038', '#38a038', 1], ['M10 13L2 8M10 13L2 18', NO, R, 1, '2 2'], dots([[10, 13]], K, 2.2)] },
  text3d: { shapes: [['M2 19L10 1L14 1L22 19L18 23L14 19L9 17L8 21Z', '#6f6c5f', K, 1.2], ['M10 13L11 8L14 14Z', '#eee', K, 0.8], ['M12 2L18 22', NO, '#333', 1.4]] },
  warehouse: { shapes: [...crate(), ['M7 3L17 1L20 5L19 14L9 15Z', '#e0222e', '#600', 0.8], ['M9 5L14 4L18 7M9 8L13 8L16 11M10 11L12 13', NO, W, 1.3]] },
  extwarehouse: { shapes: [...crate('#d8d8d4'), ['M3 7L7 3L18 3L22 7L12 15Z', '#c90c1c', '#500', 1], ['M3 7L12 9L22 7M7 3L12 9L18 3', '#ff6670', '#700', 0.7]] },
  layout: { shapes: [['M1 3L19 1L21 20L4 23Z', '#fff', '#f34450', 1.6], ['M2 7L18 5M9 11L18 9V14M9 11V19L13 18M6 11V20M12 14H18M4 3L16 2', NO, '#f34450', 1.8], ['M11 14H17V11L24 17L17 23V20H11Z', '#1b8de8', '#123', 0.9]] },
  extmanager: { shapes: [['M1 8L6 2H17L22 8L12 20Z', '#bd0c1b', '#4d0308', 1], ['M1 8H22L12 12ZM6 2L12 8L17 2', '#f0434f', '#70060e', 0.7], [dot(19, 19, 3.6), '#f5d8d8', '#d32f3a', 2, '2 1'], dots([[19, 19]], R, 1)] },
  user: { shapes: [[dot(12, 12, 12), '#f4f4f7', '#4b4b60', 1.3], [dot(12, 9, 4.3), NO, '#4b4b60', 1.3], ['M4 20C5 13 19 13 20 20', NO, '#4b4b60', 1.3]] },
  xray: { shapes: [...cube('#86a5ba', '#7499b2', '#5f86a2'), ['M4 18L13 13L21 15M13 13L11 1', NO, '#4c6c82', 0.8]] },
  backedges: { shapes: [...cube('#fafafa', '#f4f4f4', '#eee', '#666'), ['M4 18L13 13L21 15M13 13L11 1M1 5L17 9L22 6M17 9L12 23', NO, '#999', 0.9]] },
  wireframe: { shapes: [...cube(NO, NO, NO), ['M4 18L13 13L21 15M13 13L11 1M1 5L17 9L22 6M17 9L12 23', NO, '#222', 0.9]] },
  hidden: { shapes: cube('#fff', '#fff', '#f6f6f6') },
  shaded: { shapes: cube('#a9a68f', '#9b987f', '#7f7c67') },
  textured: { shapes: [...cube('#d4d1bd', '#c8c5ae', '#8e8b76'), ['M7 3L19 7M1 6L16 10L22 7M3 12L14 16L21 11M4 17L12 21L20 15', NO, '#111', 2.6]] },
  mono: { shapes: [['M1 5L11 1L22 6L21 15L12 23L4 18Z', '#1d86d8', '#222', 1.3], ['M1 5L22 6L5 18Z', '#1b95f0'], ['M2 6L20 7L5 17Z', '#8f8c76'], ['M20 7L5 18L12 22Z', '#c0b291']] },
  iso: { shapes: house },
  top: { shapes: [['M2 5L12 2V23L2 20Z', '#9c9982', '#333', 1], ['M12 2L22 3V20L12 23Z', '#87846e', '#333', 1], ['M15 3H19V10H15Z', '#f3f3f3', '#333', 1]] },
  front: { shapes: [['M4 12V22H20V12', W, K, 1.6], ['M1 13L12 3L23 13', '#f5f5f5', K, 2.2], ['M9 14H15V22H9Z', '#222'], ['M5 9V4H7V7', '#222', K, 1]] },
  right: { shapes: [['M3 11H21V22H3Z', W, K, 1.5], ['M4 4H20L23 11H1Z', '#807d68', K, 1.2], ['M13 1H19V8H13Z', W, K, 1.2]] },
  back: { shapes: [['M4 12V22H20V12', W, K, 1.6], ['M1 13L12 3L23 13', '#f5f5f5', K, 2.2], ['M17 7V3H19V9', '#fff', K, 1]] },
  left: { shapes: [['M3 11H21V22H3Z', W, K, 1.5], ['M4 4H20L23 11H1Z', '#807d68', K, 1.2], ['M6 2H10V4H6Z', '#aaa', K, 1]] },
  shellsolid: { shapes: solid('#6f6c5f', '#6f6c5f') },
  intersect: { shapes: [...solid('#fafafa', '#fafafa'), ['M1 4L6 7L14 6M6 7L5 15M9 11L15 14L23 13M15 14L14 22', NO, '#333', 0.8], ['M9 8L14 6V13L9 15Z', '#5f5c4f', K, 1]] },
  union: { shapes: [...solid('#77745f', '#77745f'), ['M9 8L14 7V12L10 13Z', NO, K, 1.4]] },
  subtract: { shapes: [...solid('#77745f', '#fafafa'), ['M9 11L15 14L23 13M15 14L14 22', NO, '#333', 0.8], ['M9 8L14 6V12L9 14Z', '#ddd', K, 1]] },
  trim: { shapes: [...solid('#1e8fe0', '#6f6c5f'), ['M8 7L13 6V12L9 13Z', W, K, 1]] },
  share: { shapes: [...crate('#d5d5d5'), ['M7 4L16 2L19 6L16 14L8 14Z', '#8c1b24', K, 0.8], ['M14 22V17H11L17 11L23 17H20V23H14Z', '#1d8a1d', '#052', 0.8]] },
  sharegray: { shapes: [['M1 5L9 1L21 4L19 17L9 21L3 16Z', '#ddd', '#aaa', 1.4], ['M1 5L10 9L21 4M10 9L9 21M2 11L19 11', NO, '#aaa', 1.1], ['M14 20V11H11L17 4L23 11H20V20Z', '#999']] },
  bentbar: { shapes: [['M-3 21C-3 4 11 -3 27 -1L23 12C12 8 5 13 4 24Z', '#ccc', K, 1.3], ['M4 24C5 13 12 8 23 12L27 -1', NO, '#555', 2], ['M4 24L18 21L25 10', NO, '#e5424e', 1, '2 1']] },
  rock: { shapes: [['M2 5L8 1L20 2L23 6L21 18L13 23L7 20L2 12Z', W, K, 1.3], ['M8 1L10 8L8 14L13 22M14 2L16 8L15 14L17 20M20 2L19 12', NO, '#666', 1]] },
  curveshapes: { shapes: [['M4 14C4 -4 20 -6 20 15', NO, '#f3848a', 1.6], ['M-1 12H9V21H-1Z', '#23985a', '#063', 1], ['M2 12L9 19', NO, '#063', 1], [dot(19, 19, 4.5), '#f7b412', '#754', 1]] },
  greenmesh: { shapes: [['M1 13L16 0L24 11L23 22L12 25L1 21Z', NO, '#21a12b', 1.5], ['M1 13L8 10L16 0L15 9L24 11M8 10L15 9L17 18L12 25M8 10L5 17L17 18L23 22M5 17L1 21', NO, '#21a12b', 1.3]] },
};

const SEP = '|';

// "+" marks a tool that has a drop-down arrow, "!" one that is switched on
const toolRows: { indent?: boolean; bars: string[][] }[] = [
  {
    indent: true,
    bars: [
      [
        'sheet', 'beads', 'patch', 'weld', 'shell', 'extrude', 'pipe', 'dome', 'spheres', 'boxarrow', 'fillet', 'chamfer', 'angle',
        'offset3d', 'drape', 'sail', 'columns', 'manycolumns', 'ringcolumns', 'fold', 'wallwindow', 'shelves', 'ramp', 'steps1',
        'steps2', 'split', 'gearshade', 'escalator', 'frame', 'arch', 'mesh', 'weave', 'louvers', 'curtains', 'hexa', 'hexb',
        'rafters', 'branches', 'gem',
      ],
    ],
  },
  {
    bars: [
      [
        'arcframe', 'zig', 'zigcloud', 'wave', 'ess', 'greenarc', 'roundrect', 'spiral', 'bluearc', 'zigolive', 'hook', 'hump',
        'maroonarc', SEP, 'zigcyan', 'ring', 'wrench', 'drop', 'wedge',
      ],
      ['pushmenu', SEP, 'pushblack', 'pushblue', 'pushred', 'pushgreen', 'pushbrown', 'pushorange', 'pushpink'],
      ['trees'],
    ],
  },
  {
    bars: [
      ['orbit', 'zoom', 'zoomwindow', 'extents', 'previous', 'hand', 'person', 'look', 'walk'],
      [
        'wallbrush', 'doorup', 'windowwall', 'gridwindow', 'railing', 'yellowsteps', 'ladder', SEP, 'checkline', 'curvecursor',
        'cornercheck', 'roofhandle', 'redquad', 'turnup', 'chain', 'bend', 'sheetdown', SEP, 'weight', 'mirror', 'pushbox', 'flex',
        'glassbox', 'blocks', 'picker', 'planks', 'axisn', 'engine', SEP, 'rb', 'fan!', 'suapp',
      ],
      ['layers', 'layersblue', 'layersq', 'layersgo'],
      ['sectionplane', 'sectionred', 'sectionhouse!', 'sectionfill!'],
      ['pointer', 'cratemenu', 'crategreen'],
    ],
  },
  {
    bars: [
      [
        'select!', SEP, 'eraser', 'pencil+', 'arc+', 'circle+', SEP, 'pushpull', 'follow', 'move', 'rotate', 'scale', SEP, 'tape',
        'text', 'paint', SEP, 'orbit', 'hand', 'zoom', 'extents', SEP, 'warehouse', 'extwarehouse', 'layout', SEP, 'extmanager', SEP,
        'user+',
      ],
      ['xray', 'backedges', SEP, 'wireframe', 'hidden', 'shaded', 'textured!', 'mono'],
      ['iso', 'top', 'front', 'right', 'back', 'left'],
      ['shellsolid', SEP, 'intersect', 'union', 'subtract', 'trim'],
      ['warehouse', 'share', 'sharegray', 'extwarehouse'],
      ['bentbar'],
      ['rock', 'curveshapes', 'greenmesh'],
    ],
  },
];

const sideTools: string[][] = [
  ['select!', 'component', 'paint', 'eraser'],
  ['pencil', 'freehand', 'rect', 'rotrect', 'circle', 'polygon', 'arcline', 'arc', 'arc3', 'pie'],
  ['move', 'pushpull', 'rotate', 'followpipe', 'scale', 'follow'],
  ['tape', 'dimension', 'protractor', 'text', 'axes', 'text3d'],
  ['orbit', 'hand', 'zoom', 'zoomwindow', 'extents', 'previous'],
  ['person', 'look', 'walk', 'sectionplane'],
  ['warehouse', 'extwarehouse', 'layout', 'extmanager'],
];

const menus = ['文件(F)', '编辑(E)', '视图(V)', '相机(C)', '绘图(R)', '工具(T)', '窗口(W)', '扩展程序 (x)', '帮助(H)'];
const trays = ['图元信息', '材质', '组件', '样式', '标记', '阴影', '场景', '工具向导', '柔化边线', '照片匹配'];

function ToolIcon({ name }: { name: string }) {
  const icon = icons[name];
  return (
    <svg viewBox="0 0 24 24" className="size-6 overflow-visible" aria-hidden="true">
      {icon.shapes.map(([d, fill = NO, stroke = NO, width = 1, dash], i) => (
        <path key={i} d={d} fill={fill} stroke={stroke} strokeWidth={width} strokeDasharray={dash} strokeLinejoin="round" />
      ))}
      {icon.labels?.map(([x, y, text, fill, size]) => (
        <text key={text} x={x} y={y} fill={fill} fontSize={size} className="font-['Liberation_Mono'] font-bold">
          {text}
        </text>
      ))}
    </svg>
  );
}

function Tool({ item }: { item: string }) {
  const name = item.replace(/[+!]/, '');
  const active = item.endsWith('!');
  const button = (
    <button
      type="button"
      aria-label={name}
      aria-pressed={active}
      className={`flex h-[33px] w-[34px] shrink-0 items-center justify-center ${
        active ? 'border border-[#90c8f6] bg-[#c2dcf3]' : 'hover:bg-[#d8e6f2]'
      }`}
    >
      <ToolIcon name={name} />
    </button>
  );
  if (!item.endsWith('+')) return button;
  return (
    <div className="flex w-14 shrink-0 items-center pl-0.5">
      {button}
      <button type="button" aria-label={`${name} menu`} className="flex h-[33px] w-[18px] items-center justify-center">
        <svg viewBox="0 0 12 8" className="h-2 w-3">
          <path d="M1 1H11L6 7Z" fill="#000" />
        </svg>
      </button>
    </div>
  );
}

function Toolbar({ items }: { items: string[] }) {
  return (
    <div className="flex h-[38px] shrink-0 items-center border-r-2 border-b-2 border-[#b4b4b4] bg-[#f1f1f1] pt-0.5">
      <div className="mr-1 ml-1 h-8 w-0.5 shrink-0 bg-[repeating-linear-gradient(180deg,#b8b8b8_0_2px,transparent_2px_4px)]" />
      {items.map((item, i) =>
        item === SEP ? <div key={i} className="mr-1 ml-[3px] h-[30px] w-px shrink-0 bg-[#8c8c8c]" /> : <Tool key={i} item={item} />
      )}
    </div>
  );
}

function SketchUpLogo({ className }: { className: string }) {
  return (
    <svg viewBox="0 0 22 24" className={className} aria-hidden="true">
      <path d="M2 5L15 1L21 5V17L9 23L2 18Z" fill="#e42328" />
      <path d="M2 5L15 1L21 5L10 9Z" fill="#f23e42" />
      <path d="M5 8L12 6L18 8V11M3 13L9 11L14 14V20M10 9L18 7" fill="none" stroke="#fff" strokeWidth="1.8" />
    </svg>
  );
}

function SogouLogo({ className }: { className: string }) {
  return (
    <svg viewBox="0 0 28 28" className={className} aria-hidden="true">
      <path d="M3 5L23 1Q25 1 26 3L27 22Q27 24 25 24L8 27Q5 27 5 25L1 8Q1 6 3 5Z" fill="#f4511e" />
      <path d="M22 8C16 4 7 7 9 11C11 14 20 12 21 16C21 21 11 22 7 18" fill="none" stroke="#fff" strokeWidth="4" />
    </svg>
  );
}

function Scene() {
  return (
    <svg viewBox="74 197 1560 814" preserveAspectRatio="xMinYMin slice" className="absolute inset-0 size-full" aria-label="模型">
      <defs>
        <linearGradient id="sky" x1="0" y1="0" x2="0" y2="1">
          <stop offset="0" stopColor="#1aa3dd" />
          <stop offset="1" stopColor="#c3e8f7" />
        </linearGradient>
        <linearGradient id="body" x1="0" y1="0" x2="1" y2="0">
          <stop offset="0" stopColor="#b8b8b8" />
          <stop offset=".05" stopColor="#e2e2e2" />
          <stop offset=".11" stopColor="#fff" />
          <stop offset=".74" stopColor="#fff" />
          <stop offset=".85" stopColor="#e6e6e6" />
          <stop offset=".93" stopColor="#b8b8b8" />
          <stop offset="1" stopColor="#777" />
        </linearGradient>
      </defs>
      <rect x="74" y="197" width="1560" height="303" fill="url(#sky)" />
      <rect x="74" y="500" width="1560" height="511" fill="#bfc0c6" />
      <g fill="none" shapeRendering="crispEdges">
        <path d="M608 197L610 390" stroke="#0000b4" />
        <path d="M618 872L620 1011" stroke="#0000b4" strokeDasharray="1 3" />
        <path d="M747 782L1461 500" stroke="#00b400" />
        <path d="M532 867L174 1010" stroke="#00b400" strokeDasharray="1 3" />
        <path d="M728 849L1634 968" stroke="#b40000" />
        <path d="M480 815L74 762" stroke="#b40000" strokeDasharray="1 3" />
      </g>
      <path
        d="M474 397C476 394 485 393 493 392C510 390 530 389 547 389H625C680 391 715 395 731 397C738 398 743 399 743 402L746 832C746 837 744 838 742 840C737 844 733 847 728 849C718 854 698 861 683 863C655 868 625 871 597 871C570 871 550 869 532 867C510 865 497 859 492 854C486 851 484 848 484 845Z"
        fill="url(#body)"
        stroke="#000"
        strokeWidth="2"
      />
    </svg>
  );
}

function Watermark() {
  return (
    <svg viewBox="0 0 1920 1080" preserveAspectRatio="xMinYMin slice" className="pointer-events-none absolute inset-0 size-full">
      <g fill="#fff" fillOpacity=".74" stroke="#777" strokeOpacity=".3" strokeWidth="2" paintOrder="stroke">
        <text x="1474" y="981" fontSize="78" className="font-['Liberation_Sans'] font-bold">
          Bai
        </text>
        <ellipse cx="1605" cy="918" rx="13" ry="17" />
        <ellipse cx="1629" cy="893" rx="12" ry="17" />
        <ellipse cx="1660" cy="895" rx="13" ry="17" />
        <ellipse cx="1679" cy="925" rx="13" ry="17" />
        <path d="M1641 920C1655 920 1661 932 1668 940C1677 949 1686 955 1685 967C1684 982 1670 986 1656 983C1646 981 1638 981 1628 983C1612 986 1599 981 1599 966C1599 953 1609 948 1616 938C1622 930 1628 920 1641 920Z" />
        <text x="1695" y="978" fontSize="59" className="font-['Noto_Sans_CJK_SC',sans-serif] font-black">
          经验
        </text>
        <text x="1475" y="1028" fontSize="41" className="font-['Liberation_Sans']">
          jingyan.baidu.com
        </text>
      </g>
      <text x="1612" y="975" fontSize="48" fill="#c0c0c8" fillOpacity=".5" stroke="#999" strokeOpacity=".25" className="font-['Liberation_Sans'] font-bold">
        du
      </text>
      {/* pointer to the camera menu */}
      <path d="M1277 685L204 44" stroke="#ec2027" strokeWidth="4" strokeLinecap="round" />
      <path d="M194 38L215 41L207 46L206 55Z" fill="#ec2027" />
    </svg>
  );
}

function InputBar() {
  const cell = 'flex w-[22px] items-center justify-center';
  return (
    <div className="absolute right-px bottom-[149px] flex h-[23px] items-stretch border border-[#a3b0c6] bg-white pl-[30px] text-[#1c73c8]">
      <SogouLogo className="absolute -top-1 -left-px size-7" />
      <button type="button" aria-label="中英文" className={cell}>
        <svg viewBox="0 0 16 16" className="size-4" fill="none" stroke="currentColor" strokeWidth="2.4">
          <path d="M2 15L8 2L14 15M4 11H12" />
        </svg>
      </button>
      <button type="button" aria-label="标点" className={cell}>
        <svg viewBox="0 0 16 16" className="size-4" fill="currentColor">
          <circle cx="5" cy="5" r="2" />
          <path d="M9 8h3q1 4-3 5l-.5-1q2-1 1.500-2H9z" />
        </svg>
      </button>
      <button type="button" aria-label="表情" className={cell}>
        <svg viewBox="0 0 16 16" className="size-4" fill="none" stroke="currentColor" strokeWidth="1.6">
          <circle cx="8" cy="8" r="7" />
          <path d="M5.500 4.500v3M10.500 4.500v3M4 9.500q4 4 8 0" />
        </svg>
      </button>
      <button type="button" aria-label="语音" className={cell}>
        <svg viewBox="0 0 16 16" className="size-4" fill="none" stroke="currentColor" strokeWidth="1.6">
          <rect x="5" y="0" width="6" height="10" rx="3" fill="currentColor" stroke="none" />
          <path d="M3 6q0 6 5 6t5-6M8 12v3M5 15h6" />
        </svg>
      </button>
      <button type="button" aria-label="键盘" className={cell}>
        <svg viewBox="0 0 16 12" className="h-3 w-4">
          <rect width="16" height="12" rx="1" fill="currentColor" />
          <path d="M2 3.500h12M2 6h12" stroke="#fff" strokeWidth="1.400" strokeDasharray="1.600 1" />
          <path d="M4 9h8" stroke="#fff" strokeWidth="1.400" />
        </svg>
      </button>
      <button type="button" aria-label="账户" className={`${cell} text-[#b4bfd8]`}>
        <svg viewBox="0 0 16 16" className="size-4" fill="currentColor">
          <circle cx="7" cy="4" r="3.500" />
          <path d="M1 14q0-6 6-6t5 3H9v3z" />
          <path d="M9 10h6v5H9z" fill="#fff" stroke="currentColor" />
        </svg>
      </button>
      <button type="button" aria-label="皮肤" className={cell}>
        <svg viewBox="0 0 16 16" className="size-4" fill="currentColor">
          <path d="M5 1q3 2 6 0l4 3-1 4h-2v7H4V8H2L1 4z" />
        </svg>
      </button>
      <button type="button" aria-label="工具箱" className={cell}>
        <svg viewBox="0 0 16 16" className="size-4" fill="currentColor">
          <path d="M1 1h6v6H1zM1 9h6v6H1zM9 9h6v6H9z" />
          <path d="M10 2h4v4h-4z" fill="none" stroke="currentColor" strokeWidth="1.600" />
        </svg>
      </button>
    </div>
  );
}

const apps = [
  {
    name: '此电脑',
    icon: (
      <>
        <path d="M1 4H23V18H1Z" fill="#2b9cf0" stroke="#c9d8e4" />
        <path d="M1 4H12L23 15V4Z" fill="#5dbdf8" />
        <path d="M10 18H14V21H18V22H6V21H10Z" fill="#99a4ac" />
      </>
    ),
  },
  {
    name: 'CAD',
    icon: (
      <>
        <path d="M0 0H24V24H0Z" fill="#138a82" stroke="#e9f4f3" />
        <path d="M12 1H23V14Z" fill="#33b0a6" />
        <text x="1" y="19" fontSize="21" fill="#e8f5f4" className="font-['Liberation_Sans'] font-bold">
          A
        </text>
        <path d="M18 1V24M13 16H23M15 13H20V19H15Z" fill="none" stroke="#e6f6f4" />
      </>
    ),
  },
  {
    name: '看图',
    running: true,
    icon: (
      <path d="M8 12C7 9 11 7 12 10C13 15 5 16 3 11C2 5 10 1 14 6C17 11 13 19 5 17M13 15C17 18 20 14 22 10" fill="none" stroke="#f5a21c" strokeWidth="2.600" strokeLinecap="round" />
    ),
  },
  {
    name: '浏览器',
    running: true,
    icon: (
      <>
        <circle cx="12" cy="13" r="10" fill="#55b62c" />
        <path d="M7 13H17C17 6 7 6 7 13C7 19 14 19 17 17" fill="none" stroke="#fff" strokeWidth="2.800" />
        <path d="M3 22C-3 14 10 0 22 2C25 4 22 7 21 8C22 1 3 8 3 22Z" fill="#8cdb4e" />
      </>
    ),
  },
  {
    name: 'Chrome',
    running: true,
    icon: (
      <>
        <circle cx="12" cy="12" r="11" fill="#fbcf2f" />
        <path d="M12 12L2.500 6.500A11 11 0 0 1 21.500 6.500H12Z" fill="#e04c3f" />
        <path d="M12 12L2.500 6.500A11 11 0 0 0 12 23L16.500 14.500Z" fill="#33a457" />
        <circle cx="12" cy="12" r="5.300" fill="#4a87f0" stroke="#fff" strokeWidth="1.200" />
      </>
    ),
  },
  {
    name: '压缩',
    running: true,
    icon: (
      <>
        <path d="M0 3H9L11 5H22V14H0Z" fill="#2f9de6" />
        <path d="M2 8H24V14H2Z" fill="#70c6f5" />
        <path d="M0 14H24V17H0Z" fill="#f2b12e" />
        <path d="M0 17H24V20H0Z" fill="#5dac3c" />
        <path d="M0 20H24V23H0Z" fill="#2b78c8" />
        <path d="M15 1H20V23H15Z" fill="#6c3f1c" />
        <path d="M15 13H20V17H15Z" fill="none" stroke="#e0b040" />
      </>
    ),
  },
];

function Taskbar() {
  return (
    <footer className="flex h-10 shrink-0 items-stretch bg-[#d6d6d6]">
      <button type="button" aria-label="开始" className="flex w-12 items-center justify-center">
        <svg viewBox="0 0 16 16" className="size-4">
          <path d="M0 2.300L7 1.300V7.600H0ZM8 1.100L16 0V7.600H8ZM0 8.500H7V14.800L0 13.800ZM8 8.500H16V16L8 14.900Z" />
        </svg>
      </button>
      <button type="button" aria-label="搜索" className="flex w-12 items-center justify-center">
        <svg viewBox="0 0 16 16" className="size-4" fill="none" stroke="#000" strokeWidth="1.400">
          <circle cx="10" cy="6" r="5.300" />
          <path d="M6.300 9.700L0 16" />
        </svg>
      </button>
      <button type="button" aria-label="Cortana" className="flex w-12 items-center justify-center">
        <svg viewBox="0 0 16 16" className="size-4" fill="none" stroke="#000" strokeWidth="2">
          <circle cx="8" cy="8" r="6.800" />
        </svg>
      </button>
      <div className="ml-[3px] flex gap-px">
        {apps.map((app) => (
          <button key={app.name} type="button" aria-label={app.name} className="flex w-12 flex-col items-center justify-end">
            <svg viewBox="0 0 24 24" className="mb-1.5 size-6">
              {app.icon}
            </svg>
            <span className={`h-0.5 w-10 ${app.running ? 'bg-[#0b78d4]' : ''}`} />
          </button>
        ))}
        <button type="button" aria-label="SketchUp" className="flex w-12 flex-col items-center justify-end bg-[#f0f0f0]">
          <SketchUpLogo className="mb-2 h-[22px] w-5" />
          <span className="h-0.5 w-12 bg-[#0b78d4]" />
        </button>
      </div>
      <div className="ml-auto flex items-center">
        <button type="button" aria-label="显示隐藏的图标" className="flex w-6 justify-center">
          <ChevronUp className="size-5" strokeWidth={1.6} />
        </button>
        <span className="w-6 text-center font-['Liberation_Sans'] text-xl leading-none text-white [paint-order:stroke] [-webkit-text-stroke:2px_#666]">A</span>
        <SogouLogo className="mr-1 ml-2 size-4" />
        <div className="w-[88px] text-center text-xs leading-[19px]">
          <div>17:29</div>
          <div>2021/4/17</div>
        </div>
        <button type="button" aria-label="通知" className="relative mr-3 ml-1 flex w-6 justify-center">
          <svg viewBox="0 0 24 26" className="h-[26px] w-6">
            <path d="M1 3H17V15H8L5 18V15H1Z" />
            <path d="M4 6H14M4 9H14M4 12H10" stroke="#eee" strokeWidth="1.200" />
            <circle cx="16" cy="18" r="7.500" fill="#d6d6d6" stroke="#777" />
            <text x="13" y="23" fontSize="12" className="font-['Open_Sans'] font-semibold">
              4
            </text>
          </svg>
        </button>
      </div>
      <button type="button" aria-label="显示桌面" className="w-[5px] border-l border-[#9a9a9a]" />
    </footer>
  );
}

export default function App() {
  return (
    <div className="relative flex h-screen flex-col overflow-hidden bg-[#f0f0f0] font-['Open_Sans','Noto_Sans_CJK_SC',sans-serif] text-black">
      <header className="bg-white">
        <div className="flex h-6 items-center pl-1">
          <SketchUpLogo className="h-[15px] w-3" />
          <h1 className="ml-1.5 text-[13px] leading-5">无标题 - SketchUp Pro 2020</h1>
          <div className="ml-auto flex pr-0.5 pb-1">
            <button type="button" aria-label="最小化" className="flex h-5 w-[46px] items-center justify-center">
              <svg viewBox="0 0 10 10" className="size-2.5" fill="none" stroke="#000">
                <path d="M0 5.500H10" />
              </svg>
            </button>
            <button type="button" aria-label="还原" className="flex h-5 w-[46px] items-center justify-center">
              <svg viewBox="0 0 10 10" className="size-2.5" fill="none" stroke="#000">
                <path d="M.5 2.500H7.500V9.500H.5ZM2.500 2.500V.5H9.500V7.500H7.500" />
              </svg>
            </button>
            <button type="button" aria-label="关闭" className="flex h-5 w-[46px] items-center justify-center">
              <svg viewBox="0 0 10 10" className="size-2.5" fill="none" stroke="#000">
                <path d="M0 0L10 10M10 0L0 10" />
              </svg>
            </button>
          </div>
        </div>
        <nav className="flex h-[17px] items-center gap-[15px] pl-[7px] text-xs leading-[17px]">
          {menus.map((menu) => (
            <button key={menu} type="button">
              {menu}
            </button>
          ))}
        </nav>
      </header>

      <div className="pt-0.5">
        {toolRows.map((row, i) => (
          <div key={i} className={`flex ${row.indent ? 'pl-16' : ''}`}>
            {row.bars.map((bar, j) => (
              <Toolbar key={j} items={bar} />
            ))}
          </div>
        ))}
      </div>

      <main className="flex min-h-0 flex-1">
        <aside className="w-[72px] shrink-0 pt-[54px]">
          <div className="border-r border-b border-[#b4b4b4] bg-[#f1f1f1] pl-0.5">
            <div className="flex h-2.5 items-center">
              <div className="h-0.5 w-[66px] bg-[repeating-linear-gradient(90deg,#b8b8b8_0_2px,transparent_2px_5px)]" />
            </div>
            {sideTools.map((group, i) => (
              <div key={i}>
                {i > 0 && <div className="mt-0.5 mb-1 ml-0.5 h-0.5 w-16 bg-[#a3a3a3]" />}
                <div className="grid w-[68px] grid-cols-2 gap-y-px pb-px">
                  {group.map((item) => (
                    <Tool key={item} item={item} />
                  ))}
                </div>
              </div>
            ))}
          </div>
        </aside>
        <section className="relative flex-1 border-t-2 border-r border-b border-l-2 border-t-[#7d7d7d] border-r-white border-b-white border-l-[#7d7d7d]">
          <Scene />
        </section>
        <aside className="ml-[5px] w-[280px] shrink-0 bg-[#f4f7fc]">
          <div className="flex h-[18px] items-center bg-linear-to-b from-[#bccbdc] to-[#d3e0ee] pl-1">
            <h2 className="text-[13px] leading-[18px]">默认面板</h2>
            <button type="button" aria-label="固定" className="mr-[9px] ml-auto">
              <svg viewBox="0 0 8 10" className="h-2.5 w-2" fill="none" stroke="#000">
                <path d="M2 6V1H6V6M5.500 1V6M0 6.500H8M4 7V10" />
              </svg>
            </button>
            <button type="button" aria-label="关闭面板" className="mr-1 flex size-3 items-center justify-center bg-[#c75050]">
              <svg viewBox="0 0 6 6" className="size-1.5" stroke="#fff" strokeWidth="1.500">
                <path d="M0 0L6 6M6 0L0 6" />
              </svg>
            </button>
          </div>
          <div className="mt-0.5 flex flex-col gap-px">
            {trays.map((tray) => (
              <div key={tray} className="flex h-[18px] items-center border-t border-l border-[#acacac] bg-linear-to-b from-[#ececec] to-[#b2b2b2] pr-[3px] pl-2">
                <button type="button" className="flex flex-1 items-center gap-[7px] text-xs leading-4">
                  <svg viewBox="0 0 6 8" className="h-2 w-1.5">
                    <path d="M0 0L6 4L0 8Z" />
                  </svg>
                  {tray}
                </button>
                <button type="button" aria-label={`关闭${tray}`} className="flex h-3.5 w-[13px] items-center justify-center border border-[#a6a6a6] bg-[#dcdcdc]">
                  <svg viewBox="0 0 6 6" className="size-[5px]" stroke="#222" strokeWidth="1.300">
                    <path d="M0 0L6 6M6 0L0 6" />
                  </svg>
                </button>
              </div>
            ))}
          </div>
        </aside>
      </main>

      <div className="flex h-7 shrink-0 items-center pl-1.5 text-base leading-7">
        <svg viewBox="0 0 14 14" className="size-3.5" fill="none" stroke="#999">
          <circle cx="7" cy="7" r="6.300" />
          <path d="M7 3C4 3 5 6 6 8V11H8V8C9 6 10 3 7 3Z" fill="#999" />
        </svg>
        <svg viewBox="0 0 14 14" className="ml-4 size-3.5" fill="none" stroke="#000" strokeWidth="1.300">
          <circle cx="7" cy="7" r="6.200" />
          <path d="M7 6V11M5.500 6H7.500" strokeWidth="2" />
          <circle cx="7" cy="3.600" r="1.100" fill="#000" stroke="none" />
        </svg>
        <span className="ml-3 h-2.5 w-px bg-[#777]" />
        <p className="ml-2.5">选择对象。切换到扩充选择。拖动鼠标选择多项。</p>
        <span className="mr-2.5 ml-auto h-2.5 w-px bg-[#777]" />
        <label htmlFor="measure">数值</label>
        <input id="measure" type="text" className="mr-[5px] ml-[9px] h-6 w-[200px] border border-[#a9b8d2] bg-transparent px-1 text-sm" />
      </div>

      <Taskbar />
      <InputBar />
      <Watermark />
    </div>
  );
}
